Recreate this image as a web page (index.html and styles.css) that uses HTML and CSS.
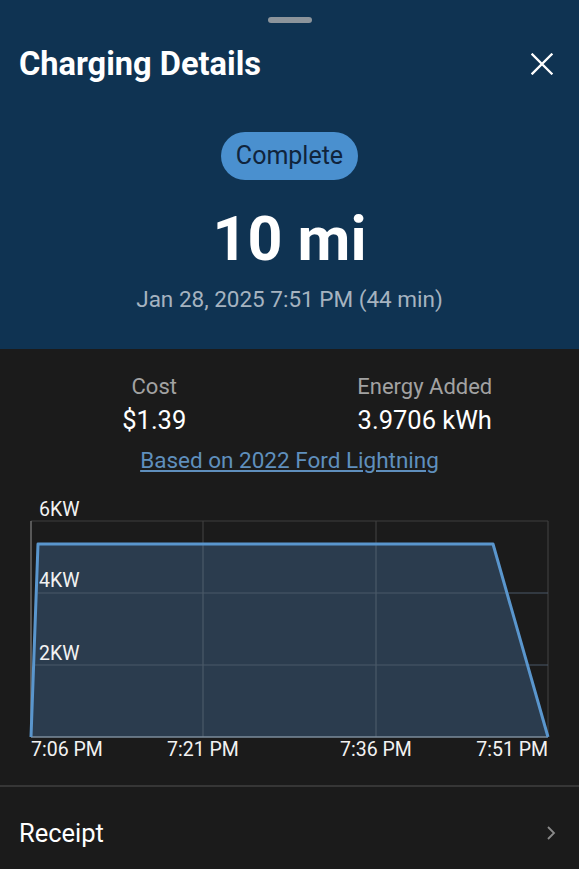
FILE: index.html
```html
<!DOCTYPE html>
<html lang="en">

<head>
  <meta charset="UTF-8">
  <meta name="viewport" content="width=device-width, initial-scale=1.0">
  <title>Charging Details</title>
  <link rel="stylesheet" href="styles.css">
</head>

<body>

  <div class="sheet">
    <!-- Header -->
    <header class="sheet-header">
      <div class="handle"></div>

      <div class="title-row">
        <h1 class="title">Charging Details</h1>
        <button class="close-btn" type="button" aria-label="Close">
          <svg width="22" height="22" viewBox="0 0 22 22">
            <path d="M1.5 1.5 L20.5 20.5 M20.5 1.5 L1.5 20.5" stroke="#ffffff" stroke-width="2.3" stroke-linecap="square" fill="none"/>
          </svg>
        </button>
      </div>

      <div class="summary">
        <span class="status-badge">Complete</span>
        <div class="distance">10 mi</div>
        <div class="session-date">Jan 28, 2025 7:51 PM (44 min)</div>
      </div>
    </header>

    <!-- Stats -->
    <section class="stats">
      <div class="stat-grid">
        <div class="stat">
          <div class="stat-label">Cost</div>
          <div class="stat-value">$1.39</div>
        </div>
        <div class="stat">
          <div class="stat-label">Energy Added</div>
          <div class="stat-value">3.9706 kWh</div>
        </div>
      </div>
      <a class="vehicle-link" href="#">Based on 2022 Ford Lightning</a>
    </section>

    <!-- Power chart -->
    <section class="chart">
      <svg class="chart-svg" width="579" height="270" viewBox="0 0 579 270">
        <polygon points="31,243 38,50 493,50 548,243" fill="#2b3c4e"/>

        <g stroke="#3e3e3e" stroke-width="1.2">
          <line x1="31" y1="27" x2="548" y2="27"/>
          <line x1="203" y1="27" x2="203" y2="50"/>
          <line x1="376" y1="27" x2="376" y2="50"/>
          <line x1="548" y1="27" x2="548" y2="243"/>
        </g>
        <g stroke="#4a5968" stroke-width="1.2">
          <line x1="38" y1="99" x2="548" y2="99"/>
          <line x1="33" y1="171" x2="548" y2="171"/>
          <line x1="203" y1="50" x2="203" y2="243"/>
          <line x1="376" y1="50" x2="376" y2="243"/>
        </g>
        <line x1="31" y1="27" x2="31" y2="243" stroke="#6e6e6e" stroke-width="1.5"/>
        <line x1="31" y1="243" x2="548" y2="243" stroke="#7c8c9c" stroke-width="1.5"/>

        <polyline points="31,243 38,50 493,50 548,243" fill="none" stroke="#5a96cd" stroke-width="3" stroke-linejoin="round"/>

        <g class="axis-y">
          <text x="39" y="22">6KW</text>
          <text x="39" y="93">4KW</text>
          <text x="39" y="166">2KW</text>
        </g>
        <g class="axis-x">
          <text x="31" y="262" text-anchor="start">7:06 PM</text>
          <text x="203" y="262" text-anchor="middle">7:21 PM</text>
          <text x="376" y="262" text-anchor="middle">7:36 PM</text>
          <text x="548" y="262" text-anchor="end">7:51 PM</text>
        </g>
      </svg>
    </section>

    <!-- Receipt row -->
    <div class="receipt-row">
      <span class="receipt-label">Receipt</span>
      <svg width="10" height="16" viewBox="0 0 10 16">
        <path d="M2 2 L8 8 L2 14" stroke="#8a8a8a" stroke-width="1.8" fill="none"/>
      </svg>
    </div>
  </div>

</body>

</html>
```

FILE: styles.css
```css
body {
  margin: 0;
  font-family: Roboto, "Noto Sans", Arial, sans-serif;
  background-color: #1b1b1b;
  color: #fff;
}

.sheet {
  width: 579px;
  min-height: 869px;
}

/* Header */
.sheet-header {
  background-color: #0f3352;
  padding: 17px 0 36px;
}

.handle {
  width: 44px;
  height: 6px;
  margin: 0 auto;
  border-radius: 3px;
  background-color: #8c949b;
}

.title-row {
  display: flex;
  justify-content: space-between;
  align-items: center;
  margin-top: 22px;
  padding: 0 26px 0 19px;
}

.title {
  margin: 0;
  font-size: 32.6px;
  line-height: 38px;
  font-weight: 700;
}

.close-btn {
  display: flex;
  padding: 0;
  border: none;
  background: none;
}

.summary {
  text-align: center;
  margin-top: 49px;
}

.status-badge {
  display: inline-block;
  height: 48px;
  padding: 0 15px;
  border-radius: 24px;
  background-color: #4a90cf;
  color: #10243c;
  font-size: 25px;
  line-height: 48px;
}

.distance {
  margin-top: 23px;
  font-size: 61px;
  line-height: 72px;
  font-weight: 700;
}

.session-date {
  margin-top: 10px;
  font-size: 22.5px;
  line-height: 28px;
  color: #a6b3c0;
}

/* Stats */
.stats {
  display: flex;
  flex-direction: column;
  align-items: center;
  padding-top: 25px;
  text-align: center;
}

.stat-grid {
  align-self: stretch;
  display: grid;
  grid-template-columns: 1fr 1fr;
  padding: 0 19px;
}

.stat-label {
  font-size: 22px;
  line-height: 26px;
  color: #a2a2a2;
}

.stat-value {
  margin-top: 5px;
  font-size: 25.5px;
  line-height: 30px;
}

.vehicle-link {
  margin-top: 11px;
  font-size: 22.5px;
  line-height: 28px;
  color: #5f8fbd;
}

/* Chart */
.chart {
  margin-top: 20px;
}

.chart-svg {
  display: block;
  font-family: Roboto, "Noto Sans", Arial, sans-serif;
}

.axis-y text {
  font-size: 19.5px;
  fill: #f2f2f2;
}

.axis-x text {
  font-size: 19.5px;
  fill: #f2f2f2;
}

/* Receipt */
.receipt-row {
  display: flex;
  justify-content: space-between;
  align-items: center;
  margin-top: 21px;
  border-top: 2px solid #363636;
  padding: 31px 23px 30px 19px;
}

.receipt-label {
  font-size: 25.5px;
  line-height: 30px;
}
```
